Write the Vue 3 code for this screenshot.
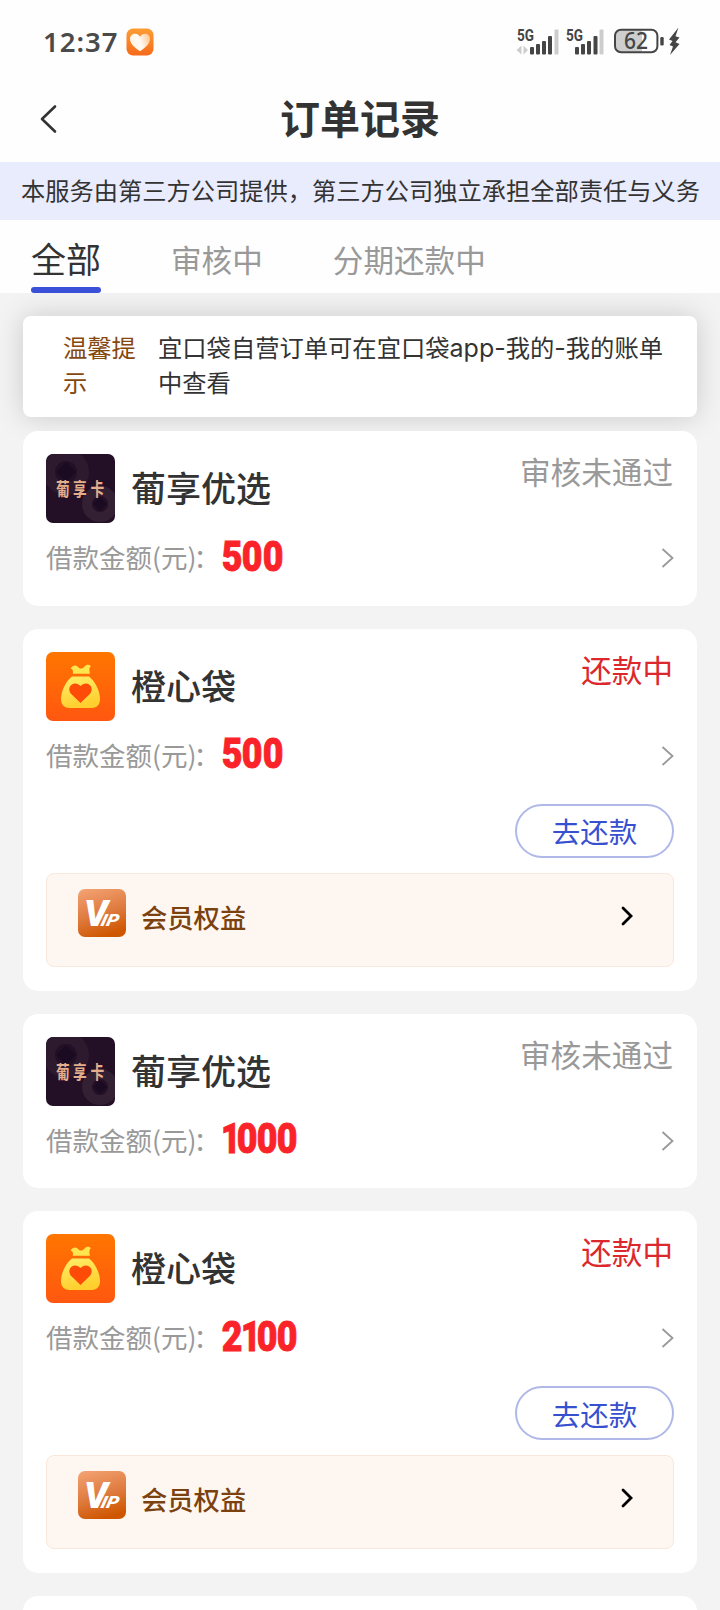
<script setup>
const orders = [
  { brand: 'card', name: '葡享优选', amount: '500', status: '审核未通过', active: false },
  { brand: 'bag', name: '橙心袋', amount: '500', status: '还款中', active: true },
  { brand: 'card', name: '葡享优选', amount: '1000', status: '审核未通过', active: false },
  { brand: 'bag', name: '橙心袋', amount: '2100', status: '还款中', active: true },
]
const tabs = ['全部', '审核中', '分期还款中']
</script>

<template>
  <div class="page">
    <header class="statusbar">
      <span class="clock">12:37</span>
      <svg class="heart-app" width="28" height="28" viewBox="0 0 28 28">
        <defs>
          <linearGradient id="heartBg" x1="0" y1="0" x2="0" y2="1">
            <stop offset="0" stop-color="#ff9d32" /><stop offset="1" stop-color="#f56a1c" />
          </linearGradient>
          <linearGradient id="heartFg" x1="0" y1="0.6" x2="1" y2="0.3">
            <stop offset="0" stop-color="#fff3e2" /><stop offset="0.5" stop-color="#fffaf4" /><stop offset="1" stop-color="#ffc995" />
          </linearGradient>
        </defs>
        <rect x="0.5" y="0.5" width="27" height="27" rx="6.5" fill="url(#heartBg)" />
        <path d="M14 23.3C8 19 4 15.5 4 10.8C4 7.8 6.3 5.8 9 5.8C11.2 5.8 13 7 14 8.8C15 7 16.8 5.8 19 5.8C21.8 5.8 24 7.8 24 10.8C24 15.5 20 19 14 23.3Z" fill="url(#heartFg)" />
      </svg>
      <svg class="signals" width="166" height="30" viewBox="516 27 166 30">
        <g fill="#454545">
          <text x="518" y="41" class="net" textLength="17" lengthAdjust="spacingAndGlyphs">5G</text>
          <text x="567" y="41" class="net" textLength="17" lengthAdjust="spacingAndGlyphs">5G</text>
          <rect x="531" y="47" width="4" height="7.5" rx="1" />
          <rect x="537" y="44" width="4" height="10.5" rx="1" />
          <rect x="543" y="41" width="4" height="13.5" rx="1" />
          <rect x="549" y="36" width="4" height="18.5" rx="1" />
          <rect x="576" y="47" width="4" height="7.5" rx="1" />
          <rect x="582" y="44" width="4" height="10.5" rx="1" />
          <rect x="588" y="41" width="4" height="13.5" rx="1" />
          <rect x="594.5" y="36" width="4" height="18.5" rx="1" />
        </g>
        <g fill="#cdcdcd">
          <rect x="555.5" y="29.5" width="4" height="25" rx="1" />
          <rect x="600.5" y="29.5" width="4" height="25" rx="1" />
          <path d="M517.5 50L522.5 45.5V54.5ZM529 50L524.5 45.5V54.5Z" />
        </g>
        <clipPath id="batteryLevel"><rect x="615" y="29" width="28" height="24" /></clipPath>
        <rect x="616" y="30" width="42" height="22" rx="6" fill="#cecece" clip-path="url(#batteryLevel)" />
        <rect x="616" y="29.7" width="42.4" height="22.6" rx="6" fill="none" stroke="#454545" stroke-width="2" />
        <text x="637" y="49" class="level" text-anchor="middle" textLength="24" lengthAdjust="spacingAndGlyphs">62</text>
        <rect x="661.3" y="37" width="3.4" height="8.5" rx="1.3" fill="#454545" />
        <path d="M679.5 27.5L670 39.5L673.5 41L670.5 45L674 46.5L671 55L680.5 44L676.5 42.2L680.5 37.5L676.5 36.2Z" fill="#454545" />
      </svg>
    </header>

    <nav class="navbar">
      <svg class="back" width="20" height="30" viewBox="0 0 20 30">
        <path d="M16 2.5L3 15L16 27.5" fill="none" stroke="#333" stroke-width="2.6" stroke-linecap="round" stroke-linejoin="round" />
      </svg>
      <h1>订单记录</h1>
    </nav>

    <div class="notice">本服务由第三方公司提供<span class="comma">，</span>第三方公司独立承担全部责任与义务</div>

    <div class="tabs">
      <div v-for="(tab, i) in tabs" :key="tab" class="tab" :class="{ current: i === 0 }">{{ tab }}</div>
    </div>

    <main class="content">
      <section class="tip">
        <span class="tip-label">温馨提示</span>
        <span class="tip-text">宜口袋自营订单可在宜口袋<span class="latin">app-</span>我的<span class="latin">-</span>我的账单中查看</span>
      </section>

      <article v-for="(order, i) in orders" :key="i" class="card" :class="{ tall: order.active }">
        <div class="card-head">
          <svg v-if="order.brand === 'card'" class="logo" width="69" height="69" viewBox="0 0 69 69">
            <rect width="69" height="69" fill="#231027" />
            <circle cx="20" cy="18" r="17" fill="none" stroke="#2d1a2f" stroke-width="12" />
            <rect x="13" y="11" width="14" height="14" fill="#1b0b22" transform="rotate(45 20 18)" />
            <circle cx="54" cy="50" r="13" fill="none" stroke="#332033" stroke-width="10" />
            <rect x="49" y="45" width="10" height="10" fill="#1b0b22" transform="rotate(45 54 50)" />
            <g class="brand-text" fill="#e4ad8c" transform="translate(0 41.5) scale(0.74 1)">
              <text x="13.5">葡</text><text x="36.5">享</text><text x="60">卡</text>
            </g>
          </svg>
          <svg v-else class="logo" width="69" height="69" viewBox="0 0 69 69">
            <defs>
              <linearGradient id="bagBg" x1="0" y1="0" x2="0" y2="1"><stop offset="0" stop-color="#ff7600" /><stop offset="1" stop-color="#ff5710" /></linearGradient>
              <linearGradient id="bagFg" x1="0" y1="0" x2="0.3" y2="1"><stop offset="0" stop-color="#ffef6a" /><stop offset="1" stop-color="#ffcf2e" /></linearGradient>
            </defs>
            <rect width="69" height="69" fill="url(#bagBg)" />
            <path d="M24.5 16.5C26.5 13.5 29.5 12.5 31.5 14.5C33.5 17 36 17.5 38.5 14.5C40.5 12.2 43 12.2 44.8 14.2C42.8 16 43.5 19.5 44 21.8H26.8C27.3 19.5 27 17 24.5 16.5Z" fill="#ffe64f" />
            <path d="M26 24.5H43C49 29 54 39 54 47C54 53 50.5 56 45.5 56H23.5C18.5 56 15 53 15 47C15 39 20 29 26 24.5Z" fill="url(#bagFg)" />
            <path d="M34.5 51L25.5 42.3C22.5 39.2 22.7 34.8 25.5 32.7C28.5 30.5 32 31.2 34.5 34C37 31.2 40.5 30.5 43.5 32.7C46.3 34.8 46.5 39.2 43.5 42.3Z" fill="#ff4b08" />
          </svg>
          <h2>{{ order.name }}</h2>
          <span class="state" :class="{ due: order.active }">{{ order.status }}</span>
        </div>

        <div class="amount-row">
          <span class="amount-label">借款金额(元)<span class="colon">：</span></span>
          <span class="amount"><span v-for="(d, k) in order.amount" :key="k" class="digit" :class="{ one: d === '1' }">{{ d }}</span></span>
          <svg class="more" width="14" height="22" viewBox="0 0 14 22">
            <path d="M2.5 2L12.5 11L2.5 20" fill="none" stroke="#999" stroke-width="1.8" />
          </svg>
        </div>

        <template v-if="order.active">
          <div class="actions"><button class="repay">去还款</button></div>
          <div class="benefit">
            <svg class="vip" width="48" height="48" viewBox="0 0 48 48">
              <defs>
                <linearGradient id="vipBg" x1="0.2" y1="0" x2="0.5" y2="1"><stop offset="0" stop-color="#f2a070" /><stop offset="0.55" stop-color="#de7a3e" /><stop offset="1" stop-color="#cf5600" /></linearGradient>
              </defs>
              <rect width="48" height="48" rx="7" fill="url(#vipBg)" />
              <text class="vip-v" x="6" y="37" textLength="24" lengthAdjust="spacingAndGlyphs">V</text>
              <g transform="translate(22 37) skewX(-14)"><text class="vip-ip" textLength="17.5" lengthAdjust="spacingAndGlyphs">IP</text></g>
            </svg>
            <span class="benefit-name">会员权益</span>
            <svg class="benefit-more" width="14" height="22" viewBox="0 0 14 22">
              <path d="M3 3L11 11L3 19" fill="none" stroke="#000" stroke-width="2.8" stroke-linecap="round" />
            </svg>
          </div>
        </template>
      </article>
      <article class="card"></article>
    </main>
  </div>
</template>

<style>
html,
body {
  margin: 0;
  background: #f3f3f3;
  overflow: hidden;
}
</style>

<style scoped>
* {
  box-sizing: border-box;
}
.page {
  width: 720px;
  height: 1610px;
  overflow: hidden;
  background: #f3f3f3;
  color: #333;
  font-family: 'Noto Sans CJK SC', sans-serif;
  display: flex;
  flex-direction: column;
}
.statusbar {
  height: 76px;
  flex: none;
  background: #fefefe;
  display: flex;
  align-items: center;
  padding: 7px 39px 0 43px;
}
.clock {
  width: 83px;
  font: 600 27.5px/34px 'Noto Sans', sans-serif;
  letter-spacing: 1px;
  color: #4a4a4a;
  white-space: nowrap;
}
.signals {
  margin-left: auto;
}
.net {
  font: 700 16px 'Roboto', sans-serif;
}
.level {
  font: 500 23px 'Noto Sans', sans-serif;
  fill: #454545;
}
.navbar {
  height: 86px;
  flex: none;
  background: #fefefe;
  display: grid;
  grid-template-columns: 40px 1fr 40px;
  align-items: center;
  padding: 0 39px;
}
h1 {
  margin: 0;
  padding-bottom: 4px;
  text-align: center;
  font-size: 40px;
  line-height: 56px;
  font-weight: 700;
}
.notice {
  height: 58px;
  flex: none;
  background: #e9ecfd;
  padding-left: 21px;
  font-size: 24.25px;
  line-height: 56px;
  white-space: nowrap;
}
.tabs {
  height: 73px;
  flex: none;
  position: relative;
  z-index: 1;
  background: #fefefe;
  display: flex;
  padding-left: 31px;
}
.tab {
  font-size: 30.6px;
  line-height: 79px;
  color: #999;
  margin-right: 70px;
}
.tab.current {
  display: flex;
  flex-direction: column;
  height: 73px;
  font-size: 35px;
  line-height: 76px;
  color: #333;
}
.tab.current::after {
  content: '';
  height: 6px;
  flex: none;
  margin-top: -9px;
  border-radius: 3px;
  background: #3a50d8;
}
.content {
  display: flex;
  flex-direction: column;
  padding: 23px 23px 0;
}
.tip {
  height: 101px;
  flex: none;
  display: flex;
  background: #fff;
  border-radius: 8px;
  box-shadow: 0 0 28px rgba(0, 0, 0, 0.17);
  padding: 13px 40px 0 40px;
  margin-bottom: 14px;
  font-size: 24.3px;
  line-height: 35px;
}
.tip-label {
  width: 77px;
  flex: none;
  color: #85480f;
}
.tip-text {
  flex: none;
  width: 512px;
  margin-left: 18px;
}
.latin {
  font-family: 'Inter', sans-serif;
  font-size: 25px;
  line-height: 1px;
}
.card {
  height: 174.5px;
  flex: none;
  background: #fff;
  border-radius: 15px;
  padding: 23px 23px 0;
  margin-bottom: 23px;
}
.card.tall {
  height: 362px;
}
.card-head {
  display: flex;
  height: 69px;
}
.logo {
  border-radius: 7px;
  flex: none;
}
.brand-text {
  font: 700 18.5px 'Noto Sans CJK SC', sans-serif;
}
h2 {
  margin: 0 0 0 16px;
  font-size: 35px;
  line-height: 65px;
  font-weight: 500;
}
.state {
  margin-left: auto;
  margin-right: 1px;
  font-size: 30.6px;
  line-height: 34px;
  color: #999;
}
.state.due {
  color: #dc282c;
}
.amount-row {
  height: 70px;
  display: flex;
  align-items: center;
}
.amount-label {
  width: 176px;
  padding-bottom: 2px;
  font-size: 26.5px;
  line-height: 66px;
  color: #999;
  white-space: nowrap;
}
.colon {
  margin-left: -3px;
}
.amount {
  display: flex;
  font: 900 42px/62px 'Roboto', sans-serif;
  padding-bottom: 3px;
  color: #fa2329;
  -webkit-text-stroke: 0.9px #fa2329;
}
.digit {
  width: 20.3px;
  display: flex;
  justify-content: center;
  transform: scaleX(0.85);
}
.digit.one {
  width: 14.5px;
  transform: translateX(1.5px) scaleX(0.8);
}
.more {
  margin-left: auto;
}
.actions {
  display: flex;
  justify-content: flex-end;
  padding-top: 13px;
}
.repay {
  width: 159px;
  height: 54px;
  padding: 1px 0 0;
  border: 2px solid #b0b8e8;
  border-radius: 27px;
  background: #fff;
  color: #3650cf;
  font-family: inherit;
  font-size: 28.5px;
  line-height: 48px;
}
.benefit {
  height: 94px;
  margin-top: 15px;
  border: 1px solid #f8e7da;
  border-radius: 8px;
  background: #fef7f1;
  display: flex;
  align-items: flex-start;
  padding: 15px 38px 0 31px;
}
.benefit-name {
  margin: 8px 0 0 15px;
  font-size: 26.3px;
  line-height: 40px;
  font-weight: 500;
  color: #7b420f;
}
.benefit-more {
  margin: 16px 1px 0 auto;
}
.vip-v {
  font: italic 900 36px 'Roboto', sans-serif;
  fill: #fff;
}
.vip-ip {
  font: italic 900 17px 'Roboto', sans-serif;
  fill: #fff;
}
</style>
